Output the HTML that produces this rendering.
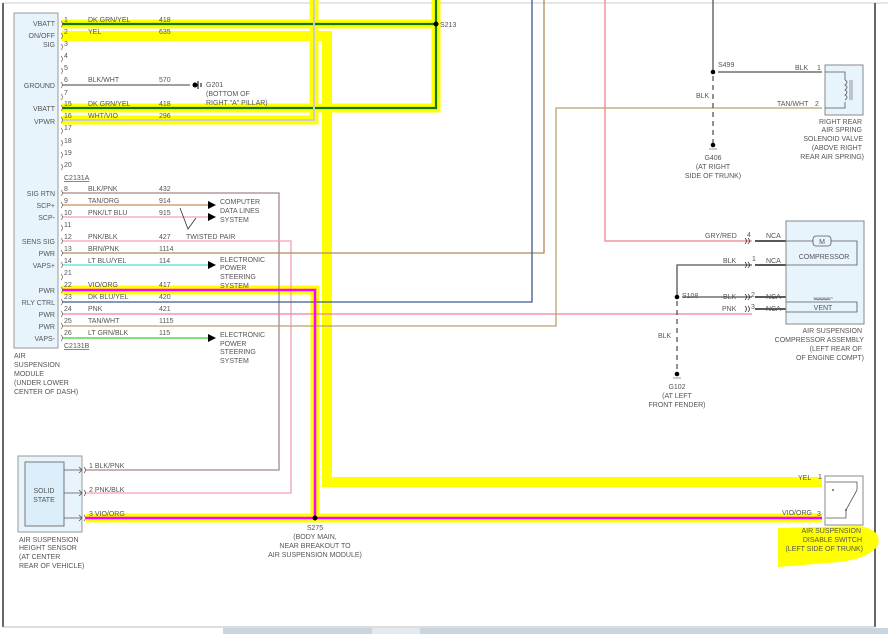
<!DOCTYPE html>
<html><head><meta charset="utf-8"><style>
html,body{margin:0;padding:0;background:#fff;width:888px;height:634px;overflow:hidden}
svg{display:block}
text{font-family:"Liberation Sans",sans-serif;font-size:7px;fill:#555}
</style></head><body>
<svg width="888" height="634" viewBox="0 0 888 634" xmlns="http://www.w3.org/2000/svg">
<rect width="888" height="634" fill="#fff"/>
<!-- page borders -->
<line x1="3" y1="3" x2="888" y2="3" stroke="#ccc" stroke-width="1"/>
<line x1="3" y1="3" x2="3" y2="627" stroke="#000" stroke-width="1.2"/>
<line x1="875" y1="3" x2="875" y2="627" stroke="#000" stroke-width="1.2"/>
<line x1="3" y1="627" x2="875" y2="627" stroke="#bbb" stroke-width="1"/>
<rect x="223" y="628" width="665" height="6" fill="#c9d5de"/>
<rect x="372" y="628" width="48" height="6" fill="#e4ebf0"/>

<!-- yellow highlights -->
<g stroke="#ffff00" fill="none" stroke-linejoin="miter">
<polyline points="62,24 436,24 436,0" stroke-width="9"/>
<polyline points="62,108 436,108 436,24" stroke-width="9"/>
<polyline points="62,36 327,36 327,482 822,482" stroke-width="10"/>
<polyline points="62,120 314,120 314,0" stroke-width="9"/>
<polyline points="62,290 315,290 315,518" stroke-width="9"/>
<polyline points="86,518 822,518" stroke-width="9"/>
<path d="M778,528 L860,526 Q882,530 878,545 Q870,558 840,562 L778,567 Z" fill="#ffff00" stroke="none"/>
</g>

<!-- wires -->
<g fill="none" stroke-width="1.3">
<polyline points="62,24 436,24 436,0" stroke="#0a7a0a" stroke-width="2.2"/>
<polyline points="62,108 436,108 436,24" stroke="#0a7a0a" stroke-width="2.2"/>
<polyline points="62,120 314,120 314,0" stroke="#ccc" stroke-width="2"/>
<line x1="62" y1="85" x2="190" y2="85" stroke="#666"/>
<polyline points="62,193 279,193 279,470 86,470" stroke="#a08890"/>
<line x1="62" y1="205" x2="208" y2="205" stroke="#c8905a"/>
<line x1="62" y1="217" x2="208" y2="217" stroke="#f0a0b8"/>
<polyline points="62,241 291,241 291,493 86,493" stroke="#f0a0b8"/>
<polyline points="62,253 544,253 544,0" stroke="#b08a60"/>
<line x1="62" y1="265" x2="208" y2="265" stroke="#50e0d0"/>
<polyline points="62,302 532,302 532,0" stroke="#3a5a90"/>
<polyline points="62,314 752,314" stroke="#f080a0"/>
<polyline points="62,326 556,326 556,108 822,108" stroke="#b8a070"/>
<line x1="62" y1="338" x2="208" y2="338" stroke="#30d030"/>
<polyline points="605,0 605,241 752,241" stroke="#f08090"/>
<polyline points="62,290 315,290 315,518" stroke="#ff00ff" stroke-width="2.5"/>
<line x1="86" y1="518" x2="822" y2="518" stroke="#ff00ff" stroke-width="2.5"/>
<polyline points="713,0 713,72" stroke="#555"/>
<line x1="718" y1="72" x2="822" y2="72" stroke="#555"/>
<line x1="713" y1="76" x2="713" y2="145" stroke="#555" stroke-dasharray="5,4"/>
<polyline points="752,265 677,265 677,297" stroke="#555"/>
<line x1="682" y1="297" x2="752" y2="297" stroke="#555"/>
<line x1="677" y1="301" x2="677" y2="375" stroke="#555" stroke-dasharray="5,4"/>
<g stroke="#222" stroke-width="1.6">
<line x1="755" y1="241" x2="786" y2="241"/><line x1="755" y1="265" x2="786" y2="265"/>
<line x1="755" y1="297" x2="786" y2="297"/><line x1="755" y1="309" x2="786" y2="309"/>
</g>
</g>
<!-- arrows -->
<g fill="#000">
<path d="M208,201 L216,205 L208,209Z"/><path d="M208,213 L216,217 L208,221Z"/>
<path d="M208,261 L216,265 L208,269Z"/><path d="M208,334 L216,338 L208,342Z"/>
</g>
<polyline points="180,208 188,229 196,218" fill="none" stroke="#333" stroke-width="0.8"/>
<!-- splices -->
<g fill="#000"><circle cx="436" cy="24" r="2.5"/><circle cx="315" cy="518" r="2.5"/>
<circle cx="713" cy="72" r="2.3"/><circle cx="677" cy="297" r="2.3"/>
<circle cx="195" cy="85" r="2.5"/><circle cx="713" cy="145" r="2.3"/><circle cx="677" cy="374" r="2.3"/></g>
<line x1="198" y1="81" x2="198" y2="89" stroke="#000"/><line x1="201" y1="83" x2="201" y2="87" stroke="#000"/>
<line x1="709" y1="149" x2="717" y2="149" stroke="#555" stroke-width=".6"/>
<line x1="673" y1="378" x2="681" y2="378" stroke="#555" stroke-width=".6"/>

<!-- module -->
<rect x="14" y="13" width="44" height="335" fill="#e8f4fc" stroke="#999"/>
<g text-anchor="end">
<text x="55" y="26">VBATT</text><text x="55" y="38">ON/OFF</text><text x="55" y="47">SIG</text>
<text x="55" y="88">GROUND</text><text x="55" y="111">VBATT</text><text x="55" y="124">VPWR</text>
<text x="55" y="196">SIG RTN</text><text x="55" y="208">SCP+</text><text x="55" y="220">SCP-</text>
<text x="55" y="244">SENS SIG</text><text x="55" y="256">PWR</text><text x="55" y="268">VAPS+</text>
<text x="55" y="293">PWR</text><text x="55" y="305">RLY CTRL</text><text x="55" y="317">PWR</text>
<text x="55" y="329">PWR</text><text x="55" y="341">VAPS-</text>
</g>
<g fill="none" stroke="#666" stroke-width=".7">
<path d="M61,21 q3,3 0,6 M61,33 q3,3 0,6 M61,44 q3,3 0,6 M61,56 q3,3 0,6 M61,68 q3,3 0,6 M61,82 q3,3 0,6 M61,94 q3,3 0,6 M61,105 q3,3 0,6 M61,117 q3,3 0,6 M61,128 q3,3 0,6 M61,140 q3,3 0,6 M61,152 q3,3 0,6 M61,164 q3,3 0,6 M61,190 q3,3 0,6 M61,202 q3,3 0,6 M61,214 q3,3 0,6 M61,225 q3,3 0,6 M61,238 q3,3 0,6 M61,250 q3,3 0,6 M61,262 q3,3 0,6 M61,274 q3,3 0,6 M61,287 q3,3 0,6 M61,299 q3,3 0,6 M61,311 q3,3 0,6 M61,323 q3,3 0,6 M61,335 q3,3 0,6"/>
</g>
<g>
<text x="64" y="22">1</text><text x="64" y="34">2</text><text x="64" y="46">3</text><text x="64" y="58">4</text><text x="64" y="70">5</text>
<text x="64" y="82">6</text><text x="64" y="95">7</text><text x="64" y="106">15</text><text x="64" y="118">16</text>
<text x="64" y="130">17</text><text x="64" y="143">18</text><text x="64" y="155">19</text><text x="64" y="167">20</text>
<text x="64" y="180" text-decoration="underline">C2131A</text>
<text x="64" y="191">8</text><text x="64" y="203">9</text><text x="64" y="215">10</text><text x="64" y="227">11</text>
<text x="64" y="239">12</text><text x="64" y="251">13</text><text x="64" y="263">14</text><text x="64" y="275">21</text>
<text x="64" y="287">22</text><text x="64" y="299">23</text><text x="64" y="311">24</text><text x="64" y="323">25</text>
<text x="64" y="335">26</text><text x="64" y="348" text-decoration="underline">C2131B</text>
<text x="88" y="22">DK GRN/YEL</text><text x="159" y="22">418</text>
<text x="88" y="34">YEL</text><text x="159" y="34">635</text>
<text x="88" y="82">BLK/WHT</text><text x="159" y="82">570</text>
<text x="88" y="106">DK GRN/YEL</text><text x="159" y="106">418</text>
<text x="88" y="118">WHT/VIO</text><text x="159" y="118">296</text>
<text x="88" y="191">BLK/PNK</text><text x="159" y="191">432</text>
<text x="88" y="203">TAN/ORG</text><text x="159" y="203">914</text>
<text x="88" y="215">PNK/LT BLU</text><text x="159" y="215">915</text>
<text x="88" y="239">PNK/BLK</text><text x="159" y="239">427</text>
<text x="88" y="251">BRN/PNK</text><text x="159" y="251">1114</text>
<text x="88" y="263">LT BLU/YEL</text><text x="159" y="263">114</text>
<text x="88" y="287">VIO/ORG</text><text x="159" y="287">417</text>
<text x="88" y="299">DK BLU/YEL</text><text x="159" y="299">420</text>
<text x="88" y="311">PNK</text><text x="159" y="311">421</text>
<text x="88" y="323">TAN/WHT</text><text x="159" y="323">1115</text>
<text x="88" y="335">LT GRN/BLK</text><text x="159" y="335">115</text>
<text x="206" y="87">G201</text><text x="206" y="96">(BOTTOM OF</text><text x="206" y="105">RIGHT "A" PILLAR)</text>
<text x="440" y="27">S213</text>
<text x="220" y="204">COMPUTER</text><text x="220" y="213">DATA LINES</text><text x="220" y="222">SYSTEM</text>
<text x="186" y="239">TWISTED PAIR</text>
<text x="220" y="262">ELECTRONIC</text><text x="220" y="270">POWER</text><text x="220" y="279">STEERING</text><text x="220" y="288">SYSTEM</text>
<text x="220" y="337">ELECTRONIC</text><text x="220" y="346">POWER</text><text x="220" y="354">STEERING</text><text x="220" y="363">SYSTEM</text>
<text x="14" y="358">AIR</text><text x="14" y="367">SUSPENSION</text><text x="14" y="376">MODULE</text>
<text x="14" y="385">(UNDER LOWER</text><text x="14" y="394">CENTER OF DASH)</text>
</g>

<!-- height sensor -->
<rect x="18" y="456" width="64" height="76" fill="#e8f4fc" stroke="#999"/>
<rect x="25" y="462" width="39" height="64" fill="#dceefa" stroke="#777"/>
<text x="44" y="493" text-anchor="middle">SOLID</text><text x="44" y="502" text-anchor="middle">STATE</text>
<g stroke="#555" fill="none" stroke-width=".8">
<path d="M64,470 H82 M79,467 l3,3 -3,3 M64,493 H82 M79,490 l3,3 -3,3 M64,518 H82 M79,515 l3,3 -3,3"/>
<path d="M84,467 q3,3 0,6 M84,490 q3,3 0,6 M84,515 q3,3 0,6"/>
</g>
<text x="89" y="468">1  BLK/PNK</text><text x="89" y="492">2  PNK/BLK</text><text x="89" y="516">3  VIO/ORG</text>
<text x="19" y="542">AIR SUSPENSION</text><text x="19" y="550">HEIGHT SENSOR</text><text x="19" y="559">(AT CENTER</text><text x="19" y="568">REAR OF VEHICLE)</text>
<g text-anchor="middle"><text x="315" y="530">S275</text><text x="315" y="539">(BODY MAIN,</text><text x="315" y="548">NEAR BREAKOUT TO</text><text x="315" y="557">AIR SUSPENSION MODULE)</text></g>

<!-- solenoid -->
<rect x="825" y="65" width="38" height="50" fill="#e8f4fc" stroke="#888"/>
<polyline points="825,72 845,72 845,80" fill="none" stroke="#555" stroke-width=".8"/>
<polyline points="825,108 845,108 845,102" fill="none" stroke="#555" stroke-width=".8"/>
<path d="M845,80 q4,2 0,5 q4,2 0,5 q4,2 0,5 q4,2 0,5" fill="none" stroke="#555" stroke-width=".8"/>
<line x1="850" y1="80" x2="850" y2="100" stroke="#555" stroke-width=".6"/><line x1="852" y1="80" x2="852" y2="100" stroke="#555" stroke-width=".6"/>
<text x="795" y="70">BLK</text><text x="817" y="70">1</text><text x="777" y="106">TAN/WHT</text><text x="815" y="106">2</text>
<text x="718" y="67">S499</text><text x="696" y="98">BLK</text>
<g text-anchor="end"><text x="862" y="124">RIGHT REAR</text><text x="862" y="132">AIR SPRING</text><text x="863" y="141">SOLENOID VALVE</text><text x="862" y="150">(ABOVE RIGHT</text><text x="864" y="159">REAR AIR SPRING)</text></g>
<g text-anchor="middle"><text x="713" y="160">G406</text><text x="713" y="169">(AT RIGHT</text><text x="713" y="178">SIDE OF TRUNK)</text></g>

<!-- compressor -->
<rect x="786" y="221" width="78" height="103" fill="#e8f4fc" stroke="#888"/>
<polyline points="786,241 857,241 857,265 786,265" fill="none" stroke="#555" stroke-width=".8"/>
<polyline points="786,302 857,302 857,312 786,312" fill="none" stroke="#555" stroke-width=".8"/>
<rect x="813" y="236" width="18" height="10" rx="3" fill="#e8f4fc" stroke="#555" stroke-width=".8"/>
<text x="822" y="244" text-anchor="middle" font-size="8">M</text>
<text x="824" y="259" text-anchor="middle">COMPRESSOR</text>
<text x="823" y="310" text-anchor="middle">VENT</text>
<path d="M813,298 h20 M814,300 q2,-2 4,0 q2,-2 4,0 q2,-2 4,0 q2,-2 4,0" fill="none" stroke="#555" stroke-width=".6"/>
<g fill="none" stroke="#333" stroke-width=".8"><path d="M745,238 q3,3 0,6 M748,238 q3,3 0,6 M745,262 q3,3 0,6 M748,262 q3,3 0,6 M745,294 q3,3 0,6 M748,294 q3,3 0,6 M745,306 q3,3 0,6 M748,306 q3,3 0,6"/></g>
<text x="705" y="238">GRY/RED</text><text x="747" y="237">4</text><text x="766" y="238">NCA</text>
<text x="723" y="263">BLK</text><text x="752" y="261">1</text><text x="766" y="263">NCA</text>
<text x="723" y="299">BLK</text><text x="751" y="297">2</text><text x="766" y="299">NCA</text>
<text x="722" y="311">PNK</text><text x="751" y="309">3</text><text x="766" y="311">NCA</text>
<text x="682" y="298">S108</text><text x="658" y="338">BLK</text>
<g text-anchor="end"><text x="862" y="333">AIR SUSPENSION</text><text x="864" y="342">COMPRESSOR ASSEMBLY</text><text x="862" y="351">(LEFT REAR OF</text><text x="864" y="360">OF ENGINE COMPT)</text></g>
<g text-anchor="middle"><text x="677" y="389">G102</text><text x="677" y="398">(AT LEFT</text><text x="677" y="407">FRONT FENDER)</text></g>

<!-- switch -->
<rect x="825" y="476" width="38" height="49" fill="#fff" stroke="#888"/>
<polyline points="826,482 857,482 857,490" fill="none" stroke="#555" stroke-width=".8"/>
<polyline points="826,518 846,518 846,510" fill="none" stroke="#555" stroke-width=".8"/>
<line x1="846" y1="510" x2="857" y2="490" stroke="#555" stroke-width=".8"/>
<circle cx="833" cy="490" r=".9" fill="#333"/><circle cx="846" cy="510" r=".9" fill="#333"/>
<text x="798" y="480">YEL</text><text x="818" y="479">1</text>
<text x="782" y="515">VIO/ORG</text><text x="817" y="516">3</text>
<g text-anchor="end"><text x="861" y="533">AIR SUSPENSION</text><text x="862" y="542">DISABLE SWITCH</text><text x="863" y="551">(LEFT SIDE OF TRUNK)</text></g>
</svg>
</body></html>
